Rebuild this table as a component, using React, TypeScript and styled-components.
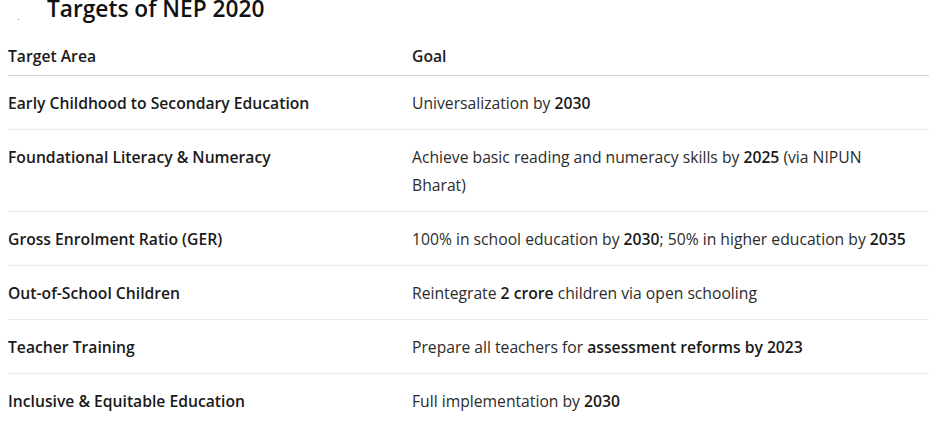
import React from 'react'
import styled, { createGlobalStyle } from 'styled-components'

type Row = {
    area: string
    goal: React.ReactNode
}

const rows: Row[] = [
    { area: 'Early Childhood to Secondary Education', goal: <>Universalization by <b>2030</b></> },
    { area: 'Foundational Literacy & Numeracy', goal: <>Achieve basic reading and numeracy skills by <b>2025</b> (via NIPUN Bharat)</> },
    { area: 'Gross Enrolment Ratio (GER)', goal: <>100% in school education by <b>2030</b>; 50% in higher education by <b>2035</b></> },
    { area: 'Out-of-School Children', goal: <>Reintegrate <b>2 crore</b> children via open schooling</> },
    { area: 'Teacher Training', goal: <>Prepare all teachers for <b>assessment reforms by 2023</b></> },
    { area: 'Inclusive & Equitable Education', goal: <>Full implementation by <b>2030</b></> },
]

const App: React.FC = () => {
    return (
        <Page>
            <GlobalStyle />
            <TitleBar>
                <Dot />
                <Title>Targets of NEP 2020</Title>
            </TitleBar>
            <Table>
                <thead>
                    <tr>
                        <Th $first>Target Area</Th>
                        <Th>Goal</Th>
                    </tr>
                </thead>
                <tbody>
                    {rows.map((row, i) => (
                        <Tr key={row.area} $last={i === rows.length - 1}>
                            <Td $first>{row.area}</Td>
                            <Td>{row.goal}</Td>
                        </Tr>
                    ))}
                </tbody>
            </Table>
        </Page>
    )
}

const GlobalStyle = createGlobalStyle`
    body {
        margin: 0;
        background: #ffffff;
        font-family: "Open Sans", "Noto Sans", sans-serif;
        color: #242424;
    }
`;

const Page = styled.div`
    width: 940px;
    height: 421px;
    overflow: hidden;
    padding: 0 11px 0 8px;
    box-sizing: border-box;
`;

const TitleBar = styled.div`
    display: flex;
    align-items: center;
    height: 22px;
    margin-top: -2px;
    position: relative;
`;

const Dot = styled.span`
    position: absolute;
    left: 10px;
    top: 21px;
    width: 1px;
    height: 1px;
    background: #c7548a;
`;

const Title = styled.h2`
    margin: 0 0 0 39px;
    font-size: 22.7px;
    line-height: 28px;
    font-weight: 600;
    color: #111111;
`;

const Table = styled.table`
    width: 100%;
    table-layout: fixed;
    border-collapse: collapse;
    margin-top: 16px;
    font-size: 15.7px;
    line-height: 28px;
`;

const Th = styled.th<{ $first?: boolean }>`
    text-align: left;
    font-weight: 600;
    color: #1a1a1a;
    padding: 6px 0 5px;
    width: ${p => (p.$first ? '404px' : 'auto')};
    border-bottom: 1px solid #d4d4d4;
`;

const Tr = styled.tr<{ $last?: boolean }>`
    border-bottom: ${p => (p.$last ? 'none' : '1px solid #ececec')};
`;

const Td = styled.td<{ $first?: boolean }>`
    vertical-align: top;
    padding: 13px ${p => (p.$first ? '0' : '16px')} 12px 0;
    font-weight: ${p => (p.$first ? 600 : 400)};
    color: ${p => (p.$first ? '#1a1a1a' : '#2b2b2b')};

    b {
        font-weight: 600;
        color: #1a1a1a;
    }
`;

export default App
